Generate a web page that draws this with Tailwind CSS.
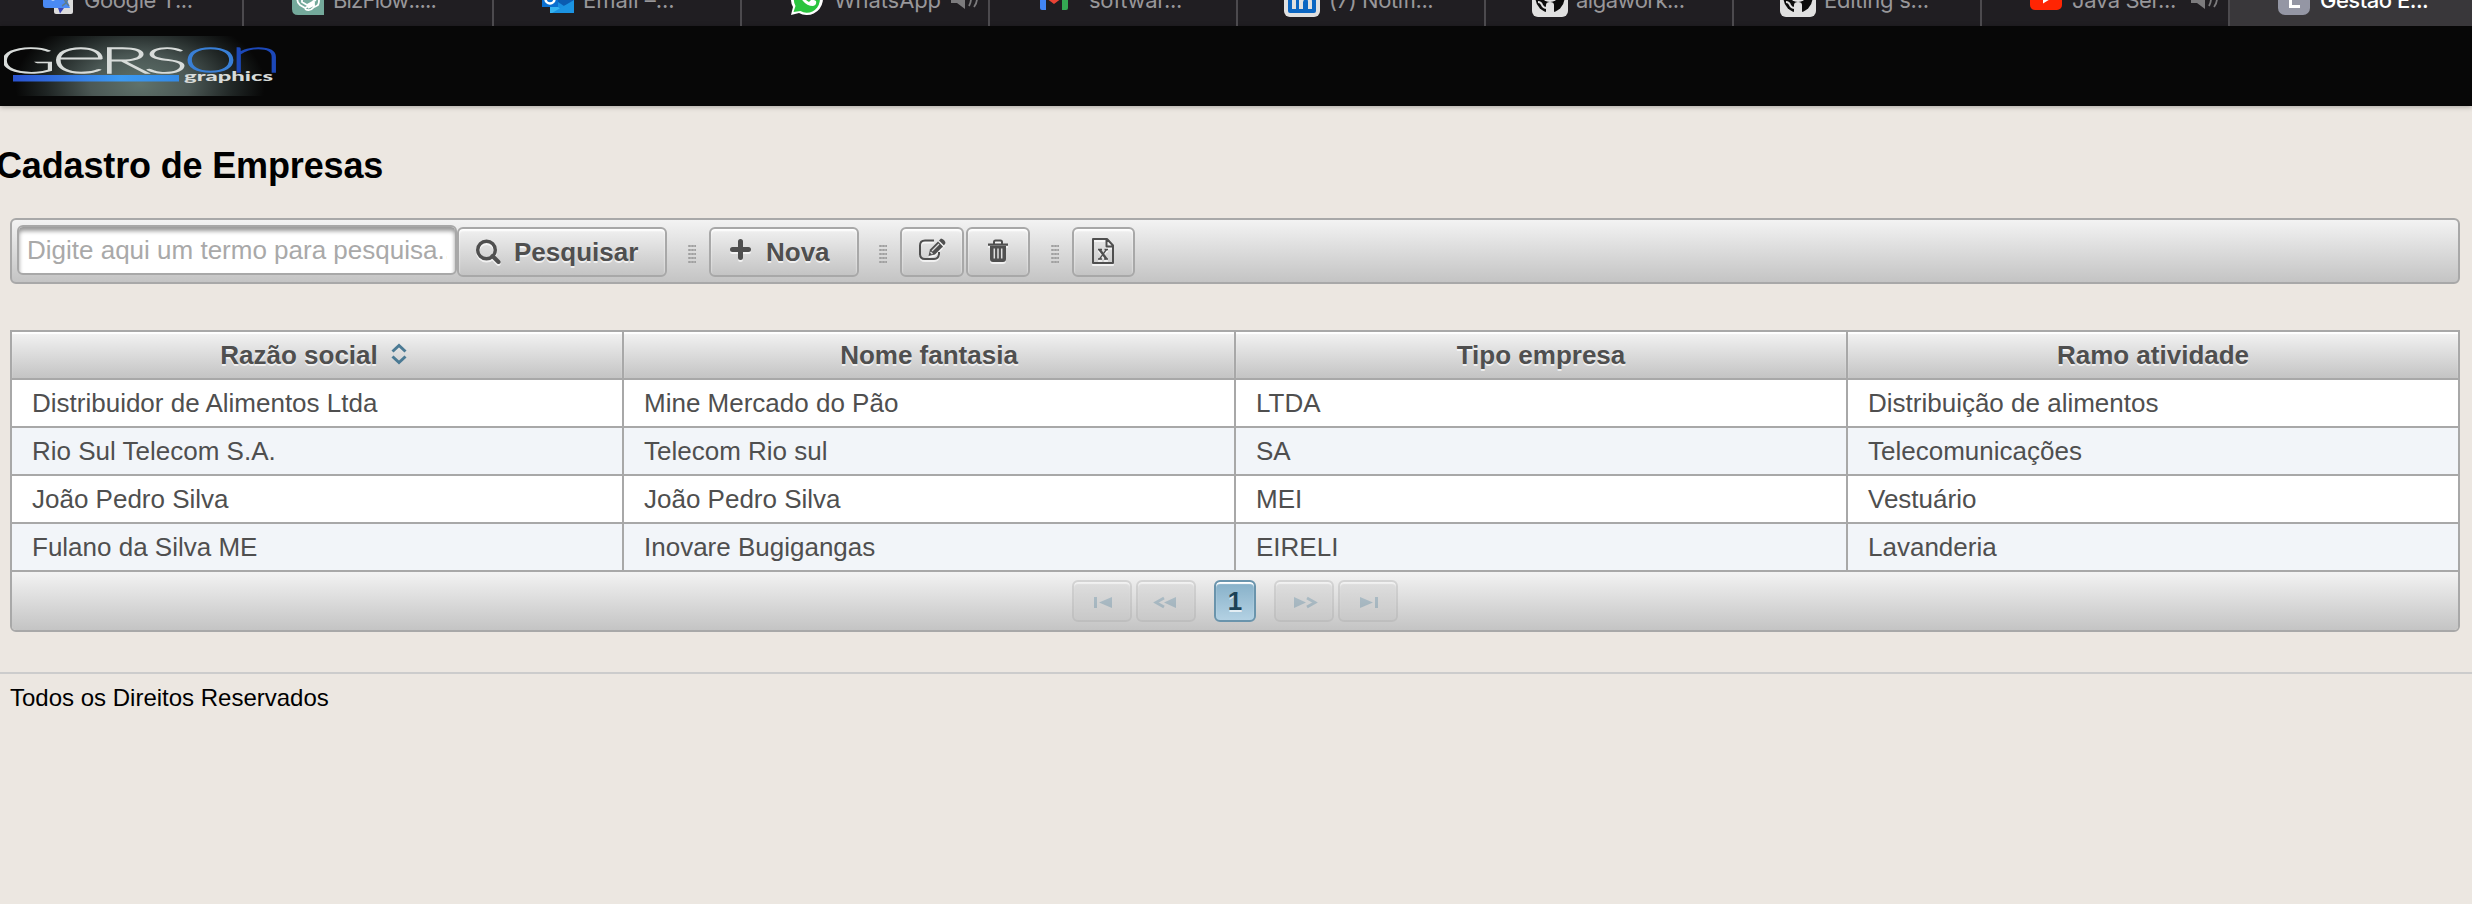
<!DOCTYPE html>
<html lang="pt-BR">
<head>
<meta charset="utf-8">
<title>Gestão Empresarial</title>
<script src="https://cdn.jsdelivr.net/npm/@tailwindcss/browser@4"></script>
</head>
<body class="h-[904px] overflow-hidden bg-[#ece7e1] font-['Liberation_Sans',Arial,sans-serif] text-[26px] text-[#4f4f4f]">

<!-- browser tabs -->
<nav class="flex h-[26px] overflow-hidden bg-[#201e22] font-[Inter,sans-serif] text-[22px] leading-[26px] tracking-[-0.4px] whitespace-pre text-[#98979a]">
  <div class="flex w-[244px] shrink-0 border-r-2 border-[#4c4a4e]">
    <svg class="h-[26px] w-[84px] shrink-0" viewBox="0 0 84 26"><rect x="54" y="-12" width="19" height="26" rx="2" fill="#dcdcdc"/><path d="M43-18h18l9 26H46q-3 0-3-3z" fill="#4a8af4"/><path d="M58 8h6l-4 5.500z" fill="#3b46b5"/><path d="M62 6q4-2 6-7M64-1q2 4 5 7" fill="none" stroke="#607d8b" stroke-width="1.500"/><path d="M49-2q4 5 8 0z" fill="#fff"/></svg>
    <span class="-mt-[13px]">Google T...</span>
  </div>
  <div class="flex w-[250px] shrink-0 border-r-2 border-[#4c4a4e]">
    <svg class="h-[26px] w-[89px] shrink-0" viewBox="0 0 89 26"><path d="M48-17h32v32H54q-6 0-6-6z" fill="#74a99b"/><g fill="none" stroke="#fff" stroke-width="1.800"><path d="M54-4q-2 6 2 9l5 3 9-5V-2M58-4v6l5 3 9-5M61 9q5 3 9-2V3M64-4l-6 3M64-3l6 3v5l-6 3M74-3q2 4 0 8-3 2-4 2"/></g></svg>
    <span class="-mt-[13px] tracking-[-0.8px]">BizFlow:....</span>
  </div>
  <div class="flex w-[248px] shrink-0 border-r-2 border-[#4c4a4e]">
    <svg class="h-[26px] w-[89px] shrink-0" viewBox="0 0 89 26"><path d="M56-8h24v21H56z" fill="#1a8fe0"/><path d="M64-8h16v10l-10 4-6-4z" fill="#0b5bb0"/><path d="M56 13V1l16 12z" fill="#35b4f2"/><path d="M58 13L80 0v13z" fill="#1b93e2"/><rect x="48" y="-10" width="16" height="17" fill="#0a6fd0"/><circle cx="56" cy="-1" r="4.500" fill="none" stroke="#fff" stroke-width="2.500"/></svg>
    <span class="-mt-[13px] tracking-normal">Email –...</span>
  </div>
  <div class="flex w-[248px] shrink-0 border-r-2 border-[#4c4a4e]">
    <svg class="h-[26px] w-[92px] shrink-0" viewBox="0 0 92 26"><path d="M49 15l2-8a16 16 0 1 1 6 6z" fill="#fff"/><path d="M51.500 12l2-6a13 13 0 1 1 5 5z" fill="#2ac43e"/><path d="M58-7q-1 3 3 8 4 5 10 5 4-1 3-5l-4-2-3 3q-4-2-5-5z" fill="#fff"/></svg>
    <span class="-mt-[13px] w-[116px] tracking-[-0.1px]">WhatsApp</span>
    <svg class="h-[26px] w-[30px]" viewBox="0 0 30 26" ><path d="M1-6h6l8-7V9L7 3H1z" fill="#7c7b7d"/><path d="M19-8q4 7 0 14M24-11q6 10 0 18" fill="none" stroke="#7c7b7d" stroke-width="1.800"/></svg>
  </div>
  <div class="flex w-[248px] shrink-0 border-r-2 border-[#4c4a4e]">
    <svg class="h-[26px] w-[99px] shrink-0" viewBox="0 0 99 26"><path d="M50-12h6V10h-4q-2 0-2-2z" fill="#4285f4"/><path d="M72-12h6V8q0 2-2 2h-4z" fill="#34a853"/><path d="M56-8l8 6 8-6v6l-8 6-8-6z" fill="#ea4335"/></svg>
    <span class="-mt-[13px] tracking-[-0.3px]">softwar...</span>
  </div>
  <div class="flex w-[248px] shrink-0 border-r-2 border-[#4c4a4e]">
    <svg class="h-[26px] w-[91px] shrink-0" viewBox="0 0 91 26"><rect x="46" y="-19" width="36" height="36" rx="6" fill="#e0e0e0"/><rect x="50" y="-15" width="28" height="28" rx="2" fill="#0b66c2"/><path d="M56 9V-5M63 9V-5M63 2q1-5 5-5t4 5v7" fill="none" stroke="#e0e0e0" stroke-width="4"/></svg>
    <span class="-mt-[13px]">(7) Notifi...</span>
  </div>
  <div class="flex w-[248px] shrink-0 border-r-2 border-[#4c4a4e]">
    <svg class="h-[26px] w-[90px] shrink-0" viewBox="0 0 90 26"><rect x="46" y="-19" width="36" height="36" rx="6" fill="#e0e0e0"/><circle cx="64" cy="-2" r="14.500" fill="#0c0c0c"/><ellipse cx="64" cy="-4" rx="8" ry="6" fill="#e0e0e0"/><path d="M60 17V5q0-3 4-3t4 3v12z" fill="#e0e0e0"/><path d="M52 2q3 0 4 3t5 3" fill="none" stroke="#e0e0e0" stroke-width="2"/></svg>
    <span class="-mt-[13px] tracking-[-0.5px]">algawork...</span>
  </div>
  <div class="flex w-[248px] shrink-0 border-r-2 border-[#4c4a4e]">
    <svg class="h-[26px] w-[90px] shrink-0" viewBox="0 0 90 26"><rect x="46" y="-19" width="36" height="36" rx="6" fill="#e0e0e0"/><circle cx="64" cy="-2" r="14.500" fill="#0c0c0c"/><ellipse cx="64" cy="-4" rx="8" ry="6" fill="#e0e0e0"/><path d="M60 17V5q0-3 4-3t4 3v12z" fill="#e0e0e0"/><path d="M52 2q3 0 4 3t5 3" fill="none" stroke="#e0e0e0" stroke-width="2"/></svg>
    <span class="-mt-[13px] tracking-[-0.25px]">Editing s...</span>
  </div>
  <div class="flex w-[248px] shrink-0 border-r-2 border-[#4c4a4e]">
    <svg class="h-[26px] w-[90px] shrink-0" viewBox="0 0 90 26"><rect x="48" y="-13" width="32" height="23" rx="5" fill="#ff2503"/><path d="M61-7l9 5-9 5.500z" fill="#fff"/></svg>
    <span class="-mt-[13px] w-[118px]">Java Ser...</span>
    <svg class="h-[26px] w-[30px]" viewBox="0 0 30 26"><path d="M1-6h6l8-7V9L7 3H1z" fill="#7c7b7d"/><path d="M19-8q4 7 0 14M24-11q6 10 0 18" fill="none" stroke="#7c7b7d" stroke-width="1.800"/></svg>
  </div>
  <div class="flex w-[242px] shrink-0 bg-[#39373a] font-medium text-white">
    <svg class="h-[26px] w-[90px] shrink-0" viewBox="0 0 90 26"><rect x="48" y="-17" width="32" height="32" rx="7" fill="#9496a4"/><path d="M60.500-9V6.500H70" fill="none" stroke="#fff" stroke-width="3"/></svg>
    <span class="-mt-[13px] tracking-[-0.5px]">Gestão E...</span>
  </div>
</nav>

<header class="h-[80px] bg-[#070707] px-[4px] pt-[10px] shadow-[0_1px_5px_rgba(0,0,0,0.3)]">
  <svg class="h-[60px] w-[290px]" viewBox="4 36 290 60">
    <defs>
      <radialGradient id="glow" gradientUnits="userSpaceOnUse" cx="0" cy="0" r="1" gradientTransform="translate(140 84) scale(125 72)"><stop offset="0" stop-color="#5f726b"/><stop offset=".4" stop-color="#4b5855"/><stop offset=".75" stop-color="#1f2524"/><stop offset="1" stop-color="#070707"/></radialGradient>
      <linearGradient id="bar"><stop offset="0" stop-color="#2a53d0"/><stop offset=".65" stop-color="#3c9af2"/><stop offset="1" stop-color="#338ae6"/></linearGradient>
    </defs>
    <rect x="4" y="36" width="290" height="60" fill="url(#glow)"/>
    <rect x="13" y="75" width="166" height="6.500" fill="url(#bar)"/>
    <g font-family="Lato, sans-serif" font-weight="100" fill="#d8dcda" stroke="#d8dcda" stroke-width="1.500">
      <text x="-1" y="73" font-size="35" textLength="57" lengthAdjust="spacingAndGlyphs">G</text>
      <text x="51" y="73" font-size="50" textLength="56" lengthAdjust="spacingAndGlyphs">e</text>
      <text x="99" y="73" font-size="35" textLength="50" lengthAdjust="spacingAndGlyphs">R</text>
      <text x="144" y="73" font-size="35" textLength="44" lengthAdjust="spacingAndGlyphs">S</text>
      <text x="183" y="72" font-size="48" textLength="55" lengthAdjust="spacingAndGlyphs" fill="#397fd6" stroke="#397fd6">o</text>
      <text x="229" y="72" font-size="48" textLength="54" lengthAdjust="spacingAndGlyphs" fill="#1c48b8" stroke="#1c48b8">n</text>
      <text x="184" y="81" font-size="14" font-weight="900" stroke="none" textLength="89" lengthAdjust="spacingAndGlyphs">graphics</text>
    </g>
  </svg>
</header>

<main class="pr-[12px] pl-[10px]">
  <h1 class="-ml-[14px] pt-[39px] text-[36px] leading-[42px] font-bold tracking-[-0.150px] text-black">Cadastro de Empresas</h1>

  <!-- toolbar -->
  <div class="mt-[31px] flex h-[66px] items-start rounded-[6px] border-2 border-[#a8a8a8] bg-linear-to-b from-[#f3f3f3] to-[#c4c4c4] pl-[5px] font-bold text-[#4f4f4f]">
    <div class="mt-[5px] h-[50px] w-[440px] overflow-hidden rounded-[6px] border-2 border-[#a8a8a8] bg-white px-[8px] leading-[46px] font-normal whitespace-nowrap text-[#a9a9a9] shadow-[inset_0_4px_4px_#999]"><div class="overflow-hidden">Digite aqui um termo para pesquisa...</div></div>
    <div class="mt-[7px] flex h-[50px] w-[210px] items-center rounded-[6px] border-2 border-[#a8a8a8] bg-linear-to-b from-[#f0f0f0] to-[#c4c4c4] pl-[16px] shadow-[inset_0_2px_2px_#fff] text-shadow-[0_2px_0_rgba(255,255,255,0.7)]">
      <svg class="h-[26px] w-[26px] drop-shadow-[0_2px_0_rgba(255,255,255,0.7)]" viewBox="0 0 26 26"><circle cx="11.500" cy="11" r="8.800" fill="none" stroke="#4f4f4f" stroke-width="3.400"/><path d="M17.500 17l6 6" stroke="#4f4f4f" stroke-width="4" stroke-linecap="round"/></svg>
      <span class="ml-[13px] leading-[46px]">Pesquisar</span>
    </div>
    <div class="mt-[24px] ml-[21px] h-[20px] w-[8px] bg-[radial-gradient(circle,#a0a0a0_1px,transparent_1.5px)] bg-size-[3px_4px]"></div>
    <div class="mt-[7px] ml-[13px] flex h-[50px] w-[150px] items-center rounded-[6px] border-2 border-[#a8a8a8] bg-linear-to-b from-[#f0f0f0] to-[#c4c4c4] pl-[19px] shadow-[inset_0_2px_2px_#fff] text-shadow-[0_2px_0_rgba(255,255,255,0.7)]">
      <svg class="-mt-[5px] h-[22px] w-[22px] drop-shadow-[0_2px_0_rgba(255,255,255,0.7)]" viewBox="0 0 22 22"><path d="M10.500 2.500v16M2.500 10.500h16" stroke="#4f4f4f" stroke-width="5" stroke-linecap="round"/></svg>
      <span class="ml-[14px] leading-[46px]">Nova</span>
    </div>
    <div class="mt-[24px] ml-[20px] h-[20px] w-[8px] bg-[radial-gradient(circle,#a0a0a0_1px,transparent_1.5px)] bg-size-[3px_4px]"></div>
    <div class="mt-[7px] ml-[13px] flex h-[50px] w-[64px] rounded-[6px] border-2 border-[#a8a8a8] bg-linear-to-b from-[#f0f0f0] to-[#c4c4c4] pt-[9px] pl-[16px] shadow-[inset_0_2px_2px_#fff]">
      <svg class="h-[26px] w-[28px] drop-shadow-[0_2px_0_rgba(255,255,255,0.7)]" viewBox="0 0 28 26"><path d="M16 2.500H7q-5 0-5 5V16q0 5 5 5h9q4.500 0 5-5v-2" fill="none" stroke="#4f4f4f" stroke-width="2"/><path d="M10.500 18l1.500-6.500L20 3.500l5 5-8 8z" fill="#4f4f4f"/><path d="M21 2.500l2-2q4 1 4.500 4.500L26 7.500z" fill="#4f4f4f"/><path d="M14 13l7-7" stroke="#ddd" stroke-width="1.300"/><path d="M12.500 14l2 2" stroke="#ddd" stroke-width="1.500"/></svg>
    </div>
    <div class="mt-[7px] ml-[2px] flex h-[50px] w-[64px] rounded-[6px] border-2 border-[#a8a8a8] bg-linear-to-b from-[#f0f0f0] to-[#c4c4c4] pt-[10px] pl-[19px] shadow-[inset_0_2px_2px_#fff]">
      <svg class="h-[24px] w-[22px] drop-shadow-[0_2px_0_rgba(255,255,255,0.7)]" viewBox="0 0 22 24"><path d="M7 5V3q0-1.500 1.500-1.500h5Q15 1.500 15 3v2" fill="none" stroke="#4f4f4f" stroke-width="2"/><path d="M1 4.500h20v2.300H1zM3 7h16v13q0 3-3 3H6q-3 0-3-3z" fill="#4f4f4f"/><path d="M7.300 9.500v10M11 9.500v10M14.700 9.500v10" stroke="#dedede" stroke-width="1.500"/></svg>
    </div>
    <div class="mt-[24px] ml-[21px] h-[20px] w-[8px] bg-[radial-gradient(circle,#a0a0a0_1px,transparent_1.5px)] bg-size-[3px_4px]"></div>
    <div class="mt-[7px] ml-[13px] flex h-[50px] w-[63px] rounded-[6px] border-2 border-[#a8a8a8] bg-linear-to-b from-[#f0f0f0] to-[#c4c4c4] pt-[9px] pl-[18px] shadow-[inset_0_2px_2px_#fff]">
      <svg class="h-[26px] w-[22px] drop-shadow-[0_2px_0_rgba(255,255,255,0.7)]" viewBox="0 0 22 26"><path d="M1 1h14l6 6.500V25H1zM14.500 1v7.500H21" fill="none" stroke="#4f4f4f" stroke-width="2" stroke-linejoin="round"/><path d="M6 11.500h4M12.500 11.500h3.500M6 21h4M12 21h4" stroke="#4f4f4f" stroke-width="1.400"/><path d="M7.500 11.500l7 9.500" stroke="#4f4f4f" stroke-width="2.400"/><path d="M14.500 11.500l-7 9.500" stroke="#4f4f4f" stroke-width="1.300"/></svg>
    </div>
  </div>

  <!-- companies table -->
  <section class="mt-[46px] overflow-hidden rounded-b-[6px] border-2 border-[#a8a8a8]">
    <div class="grid h-[48px] grid-cols-[612px_612px_612px_610px] border-b-2 border-[#a8a8a8] text-center leading-[46px] font-bold text-shadow-[0_2px_0_rgba(255,255,255,0.7)]">
      <div class="flex items-center justify-center border-r-2 border-[#a8a8a8] bg-linear-to-b from-[#f3f3f3] to-[#c4c4c4] pr-[6px] shadow-[inset_0_2px_1px_#fff]">Razão social<svg class="-mt-[2px] ml-[12px] h-[22px] w-[18px]" viewBox="0 0 18 22"><path d="M2.500 8.500L9 2.500l6.500 6M2.500 13.500L9 19.500l6.500-6" fill="none" stroke="#4b7a94" stroke-width="3"/></svg></div>
      <div class="border-r-2 border-[#a8a8a8] bg-linear-to-b from-[#f3f3f3] to-[#c4c4c4] shadow-[inset_0_2px_1px_#fff]">Nome fantasia</div>
      <div class="border-r-2 border-[#a8a8a8] bg-linear-to-b from-[#f3f3f3] to-[#c4c4c4] shadow-[inset_0_2px_1px_#fff]">Tipo empresa</div>
      <div class="bg-linear-to-b from-[#f3f3f3] to-[#c4c4c4] shadow-[inset_0_2px_1px_#fff]">Ramo atividade</div>
    </div>
    <div class="grid h-[48px] grid-cols-[612px_612px_612px_610px] border-b-2 border-[#a8a8a8] bg-white leading-[46px] *:border-[#a8a8a8] *:pl-[20px] *:not-last:border-r-2">
      <div>Distribuidor de Alimentos Ltda</div><div>Mine Mercado do Pão</div><div>LTDA</div><div>Distribuição de alimentos</div>
    </div>
    <div class="grid h-[48px] grid-cols-[612px_612px_612px_610px] border-b-2 border-[#a8a8a8] bg-[#f2f5f9] leading-[46px] *:border-[#a8a8a8] *:pl-[20px] *:not-last:border-r-2">
      <div>Rio Sul Telecom S.A.</div><div>Telecom Rio sul</div><div>SA</div><div>Telecomunicações</div>
    </div>
    <div class="grid h-[48px] grid-cols-[612px_612px_612px_610px] border-b-2 border-[#a8a8a8] bg-white leading-[46px] *:border-[#a8a8a8] *:pl-[20px] *:not-last:border-r-2">
      <div>João Pedro Silva</div><div>João Pedro Silva</div><div>MEI</div><div>Vestuário</div>
    </div>
    <div class="grid h-[48px] grid-cols-[612px_612px_612px_610px] border-b-2 border-[#a8a8a8] bg-[#f2f5f9] leading-[46px] *:border-[#a8a8a8] *:pl-[20px] *:not-last:border-r-2">
      <div>Fulano da Silva ME</div><div>Inovare Bugigangas</div><div>EIRELI</div><div>Lavanderia</div>
    </div>
    <div class="flex h-[58px] justify-center bg-linear-to-b from-[#f3f3f3] to-[#c4c4c4] pt-[8px]">
      <div class="h-[42px] w-[60px] rounded-[6px] border-2 border-[#a8a8a8] bg-linear-to-b from-[#c8c8c8] to-[#c4c4c4] opacity-35 shadow-[inset_0_2px_1px_#fff]"><svg class="h-[38px] w-[56px]" viewBox="0 0 56 38"><path d="M20 15h3v11h-3zM38 15v11l-13-5.500z" fill="#4b7a94"/></svg></div>
      <div class="ml-[4px] h-[42px] w-[60px] rounded-[6px] border-2 border-[#a8a8a8] bg-linear-to-b from-[#c8c8c8] to-[#c4c4c4] opacity-35 shadow-[inset_0_2px_1px_#fff]"><svg class="h-[38px] w-[56px]" viewBox="0 0 56 38"><path d="M38 15v11l-12-5.500z" fill="#4b7a94"/><path d="M26 16l-8 4.500 8 4.500" fill="none" stroke="#4b7a94" stroke-width="2.800"/></svg></div>
      <div class="ml-[18px] h-[42px] w-[42px] rounded-[6px] border-2 border-[#6a94ac] bg-linear-to-b from-[#86b0c8] to-[#b3d1e3] text-center leading-[38px] font-bold text-[#1c4257] shadow-[inset_0_2px_1px_#fff] text-shadow-[0_2px_0_rgba(255,255,255,0.7)]">1</div>
      <div class="ml-[18px] h-[42px] w-[60px] rounded-[6px] border-2 border-[#a8a8a8] bg-linear-to-b from-[#c8c8c8] to-[#c4c4c4] opacity-35 shadow-[inset_0_2px_1px_#fff]"><svg class="h-[38px] w-[56px]" viewBox="0 0 56 38"><path d="M18 15v11l12-5.500z" fill="#4b7a94"/><path d="M31 16l8 4.500-8 4.500" fill="none" stroke="#4b7a94" stroke-width="2.800"/></svg></div>
      <div class="ml-[4px] h-[42px] w-[60px] rounded-[6px] border-2 border-[#a8a8a8] bg-linear-to-b from-[#c8c8c8] to-[#c4c4c4] opacity-35 shadow-[inset_0_2px_1px_#fff]"><svg class="h-[38px] w-[56px]" viewBox="0 0 56 38"><path d="M35 15h3v11h-3zM20 15v11l13-5.500z" fill="#4b7a94"/></svg></div>
    </div>
  </section>
</main>

<footer class="mt-[40px] border-t-2 border-[#ccc] px-[10px] pt-[10px] text-[24px] leading-[28px] text-black">Todos os Direitos Reservados</footer>
</body>
</html>
